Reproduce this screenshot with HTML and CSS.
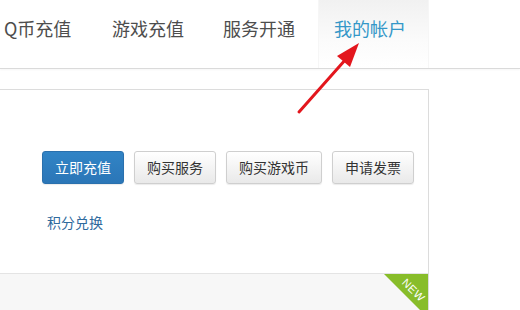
FILE: index.html
```html
<!DOCTYPE html>
<html lang="zh-CN">
<head>
    <meta charset="UTF-8">
    <title>我的帐户</title>
    <link rel="stylesheet" href="styles.css">
</head>
<body>
    <div class="page">
        <header class="topbar">
            <ul class="nav">
                <li class="first"><a href="#">Q币充值</a></li>
                <li><a href="#">游戏充值</a></li>
                <li><a href="#">服务开通</a></li>
                <li class="active"><a href="#">我的帐户</a></li>
            </ul>
        </header>

        <section class="panel">
            <div class="panel-body">
                <div class="actions">
                    <a href="#" class="btn btn-primary">立即充值</a>
                    <a href="#" class="btn">购买服务</a>
                    <a href="#" class="btn">购买游戏币</a>
                    <a href="#" class="btn">申请发票</a>
                </div>
                <a href="#" class="link">积分兑换</a>
            </div>
            <div class="panel-foot">
                <span class="ribbon"></span>
                <span class="ribbon-text">NEW</span>
            </div>
        </section>

        <!-- annotation arrow pointing at the active tab -->
        <svg class="arrow" width="80" height="80" viewBox="290 38 80 80">
            <line x1="299" y1="112" x2="346" y2="59" stroke="#e3161d" stroke-width="3" stroke-linecap="round"/>
            <polygon points="359,43 337,56 350,67" fill="#e3161d"/>
        </svg>
    </div>
</body>
</html>
```

FILE: styles.css
```css
body {
    margin: 0;
    padding: 0;
    background-color: #fff;
    font-family: "Noto Sans CJK SC", "Liberation Sans", sans-serif;
    color: #333;
}

.page {
    position: relative;
    width: 520px;
    height: 310px;
    overflow: hidden;
}

.topbar {
    height: 68px;
    border-bottom: 1px solid #dadada;
    box-shadow: 0 1px 2px rgba(0, 0, 0, 0.04);
}

.nav {
    display: flex;
    list-style: none;
    margin: 0 0 0 -15px;
    padding: 0;
}

.nav li {
    width: 111px;
    height: 68px;
    box-sizing: border-box;
    padding-left: 16px;
}

.nav li.first {
    padding-left: 19px;
}

.nav a {
    display: block;
    font-size: 18px;
    line-height: 57px;
    color: #4d4d4d;
    text-decoration: none;
    white-space: nowrap;
}

.nav li.active {
    background: linear-gradient(#f1f1f1, #fbfbfb 60%, #fff);
    box-shadow: inset 1px 0 0 #f6f6f6, inset -1px 0 0 #f6f6f6;
}

.nav li.active a {
    color: #3497c8;
}

.panel {
    margin: 20px 0 0 -20px;
    width: 449px;
    box-sizing: border-box;
    border: 1px solid #dcdcdc;
}

.panel-body {
    padding: 61px 0 40px 61px;
}

.actions {
    display: flex;
    gap: 10px;
}

.btn {
    display: block;
    height: 33px;
    box-sizing: border-box;
    padding: 0 12px;
    border: 1px solid #cfcfcf;
    border-radius: 3px;
    background: linear-gradient(#fff, #e9e9e9);
    box-shadow: 0 1px 1px rgba(0, 0, 0, 0.08);
    font-size: 14px;
    line-height: 31px;
    color: #333;
    text-decoration: none;
    white-space: nowrap;
}

.btn-primary {
    border-color: #2a70ad;
    background: linear-gradient(#3184c6, #2b76b7);
    color: #fff;
}

.link {
    display: inline-block;
    margin: 28px 0 0 5px;
    font-size: 14px;
    line-height: 20px;
    color: #2f6a9d;
    text-decoration: none;
}

.panel-foot {
    position: relative;
    height: 60px;
    border-top: 1px solid #e4e4e4;
    background-color: #f7f7f7;
}

.ribbon {
    position: absolute;
    top: 0;
    right: 0;
    width: 0;
    height: 0;
    border-top: 44px solid #88bd2a;
    border-left: 44px solid transparent;
}

.ribbon-text {
    position: absolute;
    top: 10px;
    right: 1px;
    transform: rotate(45deg);
    font-family: "Liberation Sans", sans-serif;
    font-size: 11px;
    line-height: 12px;
    color: #fff;
    letter-spacing: 0.5px;
}

.arrow {
    position: absolute;
    left: 290px;
    top: 38px;
}
```
